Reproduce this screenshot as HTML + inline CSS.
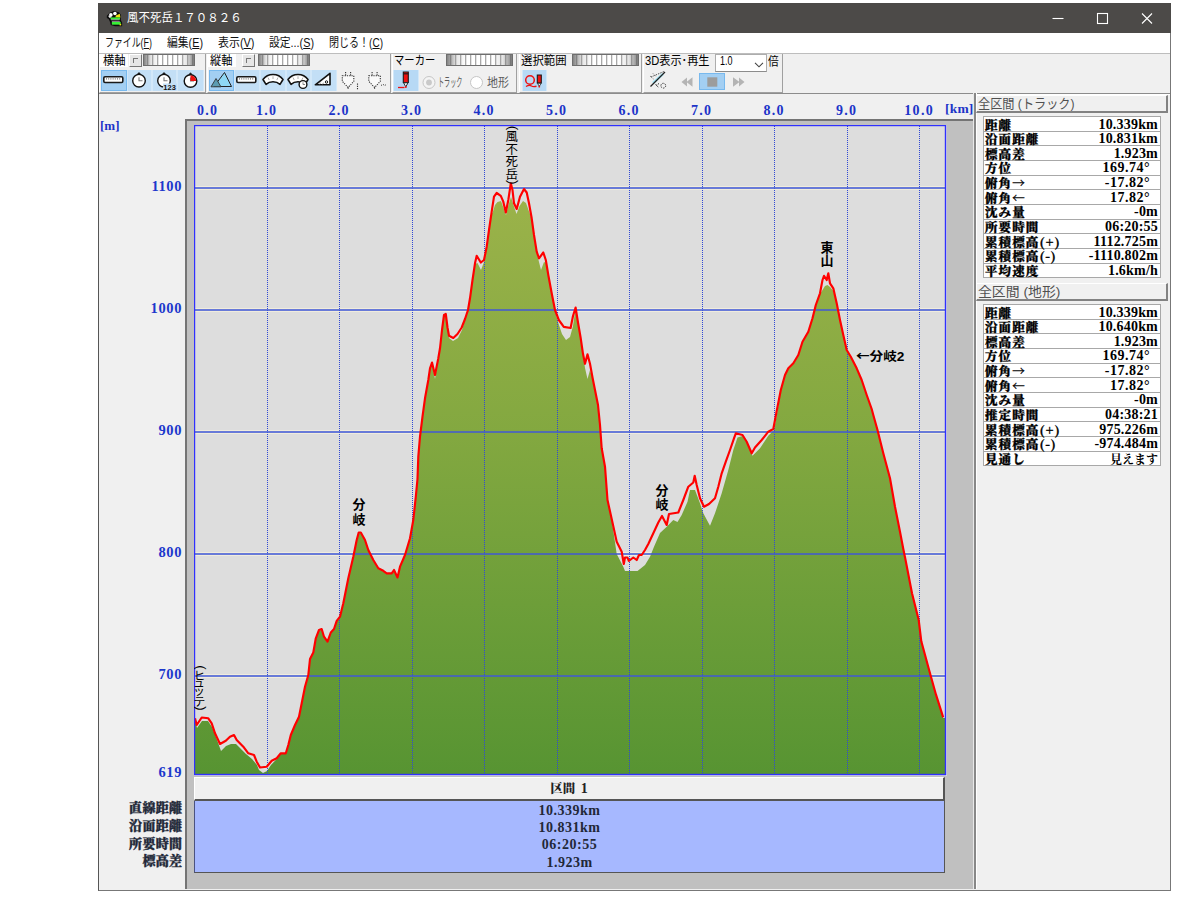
<!DOCTYPE html><html lang="ja"><head><meta charset="utf-8"><title>風不死岳１７０８２６</title><style>
*{box-sizing:border-box;margin:0;padding:0}
html,body{width:1200px;height:900px;background:#fff;overflow:hidden}
body{position:relative;font-family:"Liberation Sans","Noto Sans CJK JP",sans-serif;font-size:12px;color:#000}
.a{position:absolute}
#win{left:98px;top:3px;width:1073px;height:887.6px;background:#f0f0f0;border:1px solid #777;border-left-color:#555;border-top:none}
#title{left:98px;top:3px;width:1073px;height:30px;background:#4c4a48;color:#fff;font-size:12px;line-height:30px}
#menu{left:99px;top:33px;width:1071px;height:20px;background:#fff;font-size:12px;line-height:20px;color:#111}
#menu span{position:absolute;top:0;white-space:nowrap}
.u{text-decoration:underline}
.grp{position:absolute;top:54px;height:39px;border-right:1px solid #a0a0a0;border-bottom:1px solid #a0a0a0;border-left:1px solid #fff}
.lbl{position:absolute;top:54px;height:13px;line-height:13px;font-size:12px;white-space:nowrap;color:#000;letter-spacing:-0.3px}
.sl{position:absolute;top:53.7px;height:12.5px;border:1px solid #6e6e6e;background:linear-gradient(90deg,rgba(90,90,90,.75),rgba(150,150,150,.25) 14%,rgba(255,255,255,0) 30%,rgba(255,255,255,0) 70%,rgba(150,150,150,.25) 86%,rgba(90,90,90,.75)),repeating-linear-gradient(90deg,#fff 0,#fff 3px,#a8a8a8 3px,#a8a8a8 4px,#e4e4e4 4px,#e4e4e4 5px)}
.sb{position:absolute;top:54px;width:13px;height:13px;background:#e6e6e6;border:1px solid #fff;border-right-color:#777;border-bottom-color:#777}
.sb:after{content:"";position:absolute;left:3px;top:3px;width:4px;height:4px;border-left:1px solid #777;border-top:1px solid #777}
.tb{position:absolute;top:70px;height:22px;background:#cbe3f6}
.tb.on{background:#a6d0f2;border:1px solid #74b4ea}
.ser{font-family:"Liberation Serif","Noto Serif CJK JP","Noto Serif CJK SC",serif;font-weight:bold}
.xl{position:absolute;top:102.5px;width:44px;margin-left:-22px;text-align:center;font-size:14px;line-height:16px;color:#1c34c8;white-space:nowrap;letter-spacing:1.3px;text-indent:1.3px}
.yl{position:absolute;left:120px;width:62px;text-align:right;font-size:14.5px;line-height:16px;color:#1c38cc;letter-spacing:.6px}
.ll{position:absolute;left:110px;width:72.3px;text-align:right;font-size:13px;line-height:18px;color:#222838;white-space:nowrap;font-weight:900;letter-spacing:.3px;-webkit-text-stroke:.35px #222838}
.hd{position:absolute;left:976px;width:192px;height:18px;background:#f0f0f0;border:1px solid #fff;border-right:2px solid #828282;border-bottom:2px solid #828282;font-size:13px;line-height:15px;color:#5a5a5a;padding-left:1px;white-space:nowrap}
.tbl{position:absolute;left:983px;width:178px;border:1px solid #a8a8a8;border-bottom:none;background:#fff}
.tbl div{height:14.67px;border-bottom:1px solid #a8a8a8;position:relative;font-size:13.5px;line-height:14px;white-space:nowrap;color:#000}
.tbl div b{position:absolute;left:1px;top:.5px;font-family:'Noto Serif CJK JP','Noto Serif CJK SC',serif;font-size:12.5px;letter-spacing:1.1px;font-weight:900;-webkit-text-stroke:.3px #000}
.tbl div i{position:absolute;right:2px;top:.5px;font-style:normal;font-weight:bold;font-size:14px;letter-spacing:.2px}
.tbl div i.d{right:10px;letter-spacing:.5px}
.tbl s{text-decoration:none;font-family:'Noto Serif CJK JP','Noto Serif CJK SC',serif}
</style></head><body><div id="win" class="a"></div><div id="title" class="a"><span class="a" style="left:29.3px;top:7.5px;font-size:12px;line-height:15px;color:#fff;white-space:nowrap;transform-origin:0 0;transform:scaleX(0.956);">風不死岳１７０８２６</span><svg class="a" style="left:8px;top:6.500px" width="17" height="17" viewBox="0 0 16 16"><path d="M.8 5.500L3.500 2.500 7.500 1l4.500 1 2 2.500v5l1.200 2.500v3.200H8.500L4.500 14l-.8-3-1.200-2.500L.8 7.500z" fill="#0c0c0c"/><circle cx="4.600" cy="4.600" r="1.700" fill="#fff"/><circle cx="8.400" cy="3.300" r="1.700" fill="#fff"/><path d="M2 5.500h3v1.800H3z" fill="#e8e8e8"/><path d="M9.300 5.200l3.700-1.700.6 3.500H8.800z" fill="#f0e010"/><rect x="4.300" y="7" width="8.900" height="2" fill="#38f038"/><rect x="4.800" y="9" width="8" height=".6" fill="#e8c8e8"/><rect x="5.500" y="11.200" width="8.300" height="2.600" fill="#38f038"/><rect x="5.500" y="10.700" width="7.500" height=".5" fill="#e8c8e8"/><rect x="12.800" y="13" width="1.500" height="1.500" fill="#f0e010"/></svg><svg class="a" style="left:950px;top:8px" width="110" height="16" viewBox="0 0 110 16"><g stroke="#fff" stroke-width="1.1" fill="none"><path d="M4.5 7.5h11"/><rect x="49.500" y="2.500" width="10" height="10"/><path d="M94 2.500l10 10M104 2.500l-10 10"/></g></svg></div><div id="menu" class="a"><span class="a" style="left:6px;top:2.5px;font-size:12px;line-height:15px;color:#111;white-space:nowrap;transform-origin:0 0;transform:scaleX(0.742);">ファイル(<u>F</u>)</span><span class="a" style="left:67.7px;top:2.5px;font-size:12px;line-height:15px;color:#111;white-space:nowrap;transform-origin:0 0;transform:scaleX(0.900);">編集(<u>E</u>)</span><span class="a" style="left:118.5px;top:2.5px;font-size:12px;line-height:15px;color:#111;white-space:nowrap;transform-origin:0 0;transform:scaleX(0.912);">表示(<u>V</u>)</span><span class="a" style="left:170px;top:2.5px;font-size:12px;line-height:15px;color:#111;white-space:nowrap;transform-origin:0 0;transform:scaleX(0.900);">設定...(<u>S</u>)</span><span class="a" style="left:230px;top:2.5px;font-size:12px;line-height:15px;color:#111;white-space:nowrap;transform-origin:0 0;transform:scaleX(0.835);">閉じる！(<u>C</u>)</span></div><div class="a" style="left:99px;top:92.5px;width:1071px;height:1.500px;background:#8c8c8c"></div><div class="a" style="left:976px;top:94px;width:194px;height:1px;background:#fff"></div><div class="a" style="left:99px;top:53px;width:1071px;height:1px;background:#bdbdbd"></div><div class="a" style="left:100px;top:54px;width:28px;height:13px;background:#fff"></div><div class="a" style="left:208px;top:54px;width:28px;height:13px;background:#fff"></div><div class="grp" style="left:99px;width:107px"></div><div class="grp" style="left:207px;width:184px"></div><div class="grp" style="left:392px;width:125px"></div><div class="grp" style="left:519px;width:123px"></div><div class="grp" style="left:643px;width:140px"></div><span class="a" style="left:102.7px;top:53.8px;font-size:12px;line-height:15px;color:#000;white-space:nowrap;transform-origin:0 0;transform:scaleX(0.941);font-weight:400;">横軸</span><div class="sb" style="left:129px"></div><div class="sl" style="left:143.3px;width:52.200px"></div><span class="a" style="left:210px;top:53.8px;font-size:12px;line-height:15px;color:#000;white-space:nowrap;transform-origin:0 0;transform:scaleX(0.937);font-weight:400;">縦軸</span><div class="sb" style="left:242px"></div><div class="sl" style="left:257.5px;width:52.500px"></div><span class="a" style="left:393.7px;top:53.8px;font-size:12px;line-height:15px;color:#000;white-space:nowrap;transform-origin:0 0;transform:scaleX(0.860);font-weight:400;">マーカー</span><div class="sl" style="left:446px;width:67px"></div><span class="a" style="left:520.5px;top:53.8px;font-size:12px;line-height:15px;color:#000;white-space:nowrap;transform-origin:0 0;transform:scaleX(0.948);font-weight:400;">選択範囲</span><div class="sl" style="left:572px;width:67px"></div><span class="a" style="left:645px;top:53.8px;font-size:12px;line-height:15px;color:#000;white-space:nowrap;transform-origin:0 0;transform:scaleX(0.930);font-weight:400;">3D表示･再生</span><div class="a" style="left:715px;top:53.5px;width:51.500px;height:18.500px;background:#fff;border:1px solid #adadad;border-bottom-color:#8c8c8c"><svg class="a" style="left:38px;top:7px" width="10" height="6" viewBox="0 0 10 6"><path d="M1 .8l4 4 4-4" stroke="#444" fill="none" stroke-width="1.100"/></svg></div><span class="a" style="left:720px;top:54px;font-size:12px;line-height:15px;color:#000;white-space:nowrap;transform-origin:0 0;transform:scaleX(0.749);">1.0</span><span class="a" style="left:768px;top:55px;font-size:12px;line-height:15px;color:#000;white-space:nowrap;transform-origin:0 0;transform:scaleX(0.891);">倍</span><div class="a" style="left:101px;top:69.5px;width:25.5px;height:21.5px;background:#a3cff3;border:1px solid #78b9ee"></div><div class="a" style="left:126.5px;top:69.5px;width:25.0px;height:21.5px;background:#c3dff6;border-left:1px solid #d3e8f9;border-right:1px solid #d3e8f9"></div><div class="a" style="left:151.5px;top:69.5px;width:25.5px;height:21.5px;background:#c3dff6;border-left:1px solid #d3e8f9;border-right:1px solid #d3e8f9"></div><div class="a" style="left:177px;top:69.5px;width:26.5px;height:21.5px;background:#c3dff6;border-left:1px solid #d3e8f9;border-right:1px solid #d3e8f9"></div><div class="a" style="left:208.5px;top:69.5px;width:25.5px;height:21.5px;background:#a3cff3;border:1px solid #78b9ee"></div><div class="a" style="left:234px;top:69.5px;width:25.5px;height:21.5px;background:#c3dff6;border-left:1px solid #d3e8f9;border-right:1px solid #d3e8f9"></div><div class="a" style="left:259.5px;top:69.5px;width:26.0px;height:21.5px;background:#c3dff6;border-left:1px solid #d3e8f9;border-right:1px solid #d3e8f9"></div><div class="a" style="left:285.5px;top:69.5px;width:25.5px;height:21.5px;background:#c3dff6;border-left:1px solid #d3e8f9;border-right:1px solid #d3e8f9"></div><div class="a" style="left:311px;top:69.5px;width:25.5px;height:21.5px;background:#c3dff6;border-left:1px solid #d3e8f9;border-right:1px solid #d3e8f9"></div><div class="a" style="left:393px;top:69.5px;width:25.5px;height:21.5px;background:#b7d9f5;border-left:1px solid #d3e8f9;border-right:1px solid #d3e8f9"></div><div class="a" style="left:521.5px;top:69.5px;width:25.5px;height:21.5px;background:#b7d9f5;border-left:1px solid #d3e8f9;border-right:1px solid #d3e8f9"></div><div class="a" style="left:699.3px;top:73.3px;width:25.40000000000009px;height:16.400000000000006px;background:#a3cff3;border:1px solid #78b9ee"></div><svg class="a" style="left:98px;top:52px" width="700" height="42" viewBox="98 52 700 42"><rect x="103.8" y="76.700" width="19" height="5.800" rx="1.200" fill="#fff" stroke="#1a1a1a" stroke-width="1.600"/><path d="M106.5 77.500v2.200m2.200-2.200v2.200m2.200-2.200v2.200m2.200-2.200v2.200m2.200-2.200v2.200m2.200-2.200v2.200m2.200-2.200v2.200" stroke="#8a8a8a" stroke-width=".9"/><circle cx="139" cy="80.7" r="6.3" fill="#fff" stroke="#111" stroke-width="1.400"/><path d="M137.5 74.10000000000001l1.500-1.700 1.500 1.700z" fill="#111" stroke="#111" stroke-width=".6"/><path d="M139 77.2V80.7h3.500" stroke="#777" stroke-width="1.100" fill="none"/><circle cx="164" cy="80.7" r="6.3" fill="#fff" stroke="#111" stroke-width="1.400"/><path d="M162.5 74.10000000000001l1.500-1.700 1.500 1.700z" fill="#111" stroke="#111" stroke-width=".6"/><path d="M164 77.2V80.7h3.500" stroke="#777" stroke-width="1.100" fill="none"/><rect x="163" y="83.500" width="14" height="7" fill="#c3dff6"/><text x="163.300" y="90" font-family="Liberation Sans,sans-serif" font-size="7.500" font-weight="bold" fill="#111" textLength="12.500" lengthAdjust="spacingAndGlyphs">123</text><circle cx="190.5" cy="81" r="6.3" fill="#fff" stroke="#111" stroke-width="1.400"/><path d="M189.0 74.4l1.500-1.700 1.500 1.700z" fill="#111" stroke="#111" stroke-width=".6"/><path d="M190.5 77.5V81h3.500" stroke="#777" stroke-width="1.100" fill="none"/><path d="M190.500 81V75.300A5.700 5.700 0 0 1 196.200 81z" fill="#ee1111"/><path d="M214 86.500l10.500-14 7 14z" fill="#8ed7f4" stroke="#222" stroke-width="1"/><path d="M211 86.800l5-8.300 5 8.300z" fill="#5c9cb2" stroke="#333" stroke-width=".9"/><rect x="236.8" y="76.700" width="19" height="5.800" rx="1.200" fill="#fff" stroke="#1a1a1a" stroke-width="1.600"/><path d="M239.5 77.500v2.200m2.200-2.200v2.200m2.200-2.200v2.200m2.200-2.200v2.200m2.200-2.200v2.200m2.200-2.200v2.200m2.200-2.200v2.200" stroke="#8a8a8a" stroke-width=".9"/><path d="M263 79.500c2.500-3.500 6-5 10-5s7.500 1.500 10 5l-3 4.800c-2-1.800-4.300-2.600-7-2.600s-5 .8-7 2.600z" fill="#fff" stroke="#111" stroke-width="1.600" stroke-linejoin="round"/><path d="M268 77.500l1.200 2.500M273 76.300v2.700M278 77.500l-1.200 2.500" stroke="#999" stroke-width=".8"/><path d="M288 79.500c2.500-3.500 6-5 10-5s7.500 1.500 10 5l-3 4.800c-2-1.800-4.300-2.600-7-2.600s-5 .8-7 2.600z" fill="#fff" stroke="#111" stroke-width="1.600" stroke-linejoin="round"/><path d="M293 77.500l1.200 2.500M298 76.300v2.700M303 77.500l-1.200 2.500" stroke="#999" stroke-width=".8"/><circle cx="303" cy="84.500" r="3.900" fill="#fff" stroke="#111" stroke-width="1.400"/><path d="M303 82.300v2.200h2" stroke="#777" stroke-width=".9" fill="none"/><path d="M315.300 84.800L330 73.300V84.800z" fill="#fff" stroke="#111" stroke-width="1.600" stroke-linejoin="round"/><circle cx="326.500" cy="82" r="1.200" fill="#fff" stroke="#111" stroke-width="1"/><path d="M319.500 84.500l1-1.800m2 1.800l1-1.800" stroke="#777" stroke-width=".7"/><g stroke="#333" stroke-width="1.100" fill="none" stroke-dasharray="1.200 1.100"><path d="M342.3 75.800h11.500v5.500l-5.700 6.200-5.800-6.200z" fill="#fafafa"/><path d="M345.6 72v3.800M350.6 72v3.800M348.1 87.500v2"/></g><path d="M357.500 83.500v6" stroke="#333" stroke-width="1.100" stroke-dasharray="1.200 1.100"/><g stroke="#333" stroke-width="1.100" fill="none" stroke-dasharray="1.200 1.100"><path d="M368.8 75.800h11.500v5.500l-5.700 6.200-5.800-6.200z" fill="#fafafa"/><path d="M372.1 72v3.800M377.1 72v3.800M374.6 87.500v2"/></g><path d="M381 85.500l2-1.200 1.500 1.200 2-1" stroke="#444" stroke-width="1" stroke-dasharray="1.200 1.100" fill="none"/><path d="M403.300 72h5v10.500h-5z" fill="#ee1111" stroke="#1a1a1a" stroke-width="1.100"/><path d="M403.300 73.800h5" stroke="#1a1a1a" stroke-width="1.200"/><path d="M403.600 82.800l2.200 4 2.200-4z" fill="#fff" stroke="#1a1a1a" stroke-width=".9"/><circle cx="405.800" cy="87" r="1" fill="#ee1111"/><path d="M398 87.500h6.500" stroke="#ee1111" stroke-width="1.300"/><circle cx="429" cy="82.500" r="6" fill="#f4f4f4" stroke="#c6c6c6" stroke-width="1"/><circle cx="429" cy="82.500" r="2.900" fill="#c9c9c9"/><circle cx="476.500" cy="82.500" r="6" fill="#fff" stroke="#c6c6c6" stroke-width="1"/><ellipse cx="530" cy="80" rx="4.300" ry="4.300" fill="none" stroke="#ee1111" stroke-width="1.500"/><path d="M526 86.500c2.500-1.500 4-1.500 5.500-.5s3 .8 5 .3" stroke="#ee1111" stroke-width="1.400" fill="none"/><path d="M537.300 75h4v8h-4z" fill="#ee1111" stroke="#1a1a1a" stroke-width="1.100"/><path d="M537.500 83.300l1.800 3 1.800-3z" fill="#fff" stroke="#1a1a1a" stroke-width=".8"/><circle cx="539.300" cy="86.700" r=".9" fill="#ee1111"/><g fill="none"><path d="M651 77l13-5.500" stroke="#555" stroke-width="1" stroke-dasharray="1.500 1"/><path d="M653 83l10-9" stroke="#a5e6f7" stroke-width="2.600"/><path d="M650.500 86.500L665 72" stroke="#222" stroke-width="1.300"/><path d="M650 76l3.500 3M653 73.500l3 3" stroke="#555" stroke-width=".9" stroke-dasharray="1 1"/><circle cx="663.300" cy="85.700" r="2.400" stroke="#333" stroke-width="1" stroke-dasharray="1.300 1"/><path d="M655.500 84.500l3.500 3.200M659 83.500l-3 2" stroke="#333" stroke-width="1" stroke-dasharray="1.300 1"/></g><path d="M681.500 82l5.500-4.500v9zM686.500 82l6-4.700v9.400z" fill="#b4b4b4"/><rect x="707.300" y="77.300" width="10" height="9.400" fill="#9c9c9c"/><path d="M744.500 82l-5.500-4.500v9zM739.500 82l-6.500-4.700v9.400z" fill="#b4b4b4"/></svg><span class="a" style="left:437.5px;top:75.5px;font-size:12px;line-height:15px;color:#5c5c5c;white-space:nowrap;transform-origin:0 0;transform:scaleX(0.510);">トラック</span><span class="a" style="left:486.5px;top:75.5px;font-size:12px;line-height:15px;color:#5c5c5c;white-space:nowrap;transform-origin:0 0;transform:scaleX(0.916);">地形</span><div class="a" style="left:185px;top:119px;width:788px;height:770px;background:#c0c0c0;border-left:2px solid #747474;border-top:2px solid #747474"></div><div class="a" style="left:973px;top:93px;width:1px;height:796px;background:#e8e8e8"></div><div class="a" style="left:974px;top:93px;width:2px;height:796px;background:#888"></div><div class="a" style="left:976px;top:93px;width:1px;height:796px;background:#fff"></div><div class="xl ser" style="left:207.0px">0.0</div><div class="xl ser" style="left:266.0px">1.0</div><div class="xl ser" style="left:338.5px">2.0</div><div class="xl ser" style="left:411.0px">3.0</div><div class="xl ser" style="left:483.5px">4.0</div><div class="xl ser" style="left:556.0px">5.0</div><div class="xl ser" style="left:628.5px">6.0</div><div class="xl ser" style="left:701.0px">7.0</div><div class="xl ser" style="left:773.5px">8.0</div><div class="xl ser" style="left:846.0px">9.0</div><div class="xl ser" style="left:918.5px">10.0</div><div class="a ser" style="left:945px;top:101px;font-size:13.5px;letter-spacing:.2px;line-height:16px;color:#1c34c8">[km]</div><div class="a ser" style="left:100px;top:118px;font-size:13px;line-height:16px;color:#1c34c8">[m]</div><div class="yl ser" style="top:177.7px">1100</div><div class="yl ser" style="top:299.7px">1000</div><div class="yl ser" style="top:421.7px">900</div><div class="yl ser" style="top:543.7px">800</div><div class="yl ser" style="top:665.7px">700</div><div class="yl ser" style="top:764.0px">619</div><div class="ll ser" style="top:799.2px">直線距離</div><div class="ll ser" style="top:816.9px">沿面距離</div><div class="ll ser" style="top:834.6px">所要時間</div><div class="ll ser" style="top:852.3px">標高差</div><svg class="a" style="left:194px;top:125px" width="753" height="651" viewBox="194 125 753 651"><defs><linearGradient id="g" gradientUnits="userSpaceOnUse" x1="0" y1="185" x2="0" y2="775"><stop offset="0" stop-color="#9cb34a"/><stop offset="0.42" stop-color="#83a840"/><stop offset="1" stop-color="#579432"/></linearGradient></defs><rect x="194" y="125" width="753" height="651" fill="#dddddd"/><path d="M195 186.5H945M195 189.5H945" stroke="#fff8dc" stroke-opacity=".55" stroke-width="1" fill="none"/><path d="M195 308.5H945M195 311.5H945" stroke="#fff8dc" stroke-opacity=".55" stroke-width="1" fill="none"/><path d="M195 430.5H945M195 433.5H945" stroke="#fff8dc" stroke-opacity=".55" stroke-width="1" fill="none"/><path d="M195 552.5H945M195 555.5H945" stroke="#fff8dc" stroke-opacity=".55" stroke-width="1" fill="none"/><path d="M195 674.5H945M195 677.5H945" stroke="#fff8dc" stroke-opacity=".55" stroke-width="1" fill="none"/><polygon points="194.5,775 194.500,719.1 195.0,719.1 197.0,728.0 202.0,721.0 208.0,721.0 212.0,727.0 216.0,737.0 221.0,751.0 226.0,746.0 231.0,744.0 236.0,744.0 240.0,748.0 246.0,754.0 252.0,759.0 257.0,765.0 259.0,770.0 263.0,773.0 267.0,771.0 271.0,765.0 276.7,759.1 280.8,754.1 285.8,754.1 288.3,745.8 290.8,735.8 295.0,725.8 299.0,717.5 301.7,704.1 305.0,687.5 308.3,675.8 310.0,659.8 313.3,653.3 315.8,639.1 319.0,630.8 321.7,629.8 324.0,637.5 327.5,642.5 330.8,633.3 334.0,629.8 336.7,621.6 340.0,617.5 343.3,604.1 348.3,579.1 353.3,557.5 356.7,540.8 358.7,533.3 360.8,533.3 365.0,540.8 368.3,550.8 373.3,560.8 378.3,569.1 383.3,571.6 386.7,574.1 391.7,574.1 394.0,570.8 397.5,578.3 400.0,567.5 405.0,555.8 410.0,539.1 413.3,520.8 415.8,497.5 417.5,479.8 418.3,457.5 420.0,437.5 422.5,417.5 425.0,399.1 428.3,380.8 430.0,369.1 432.0,363.3 435.0,379.0 438.3,359.1 440.0,349.1 442.0,330.8 444.0,315.8 445.8,314.8 449.0,338.0 453.0,341.0 458.0,338.0 462.0,330.0 465.0,319.8 468.0,310.8 470.0,299.1 472.5,280.8 475.0,264.1 477.5,263.0 481.0,270.0 484.0,262.0 486.7,247.5 489.0,230.8 491.7,212.5 492.5,213.0 495.0,205.0 497.5,202.0 501.0,201.0 503.5,208.0 506.0,215.0 508.5,205.0 511.0,197.0 513.5,205.0 516.5,214.0 519.5,206.0 523.0,201.0 526.0,203.0 528.5,210.0 531.7,219.1 534.0,235.8 536.7,252.5 538.0,258.0 541.0,270.0 544.0,262.0 546.0,263.0 548.3,275.8 551.7,294.1 555.0,310.8 558.0,322.0 562.0,334.0 566.0,340.0 570.0,337.0 573.0,326.0 575.6,308.3 578.0,323.3 580.6,338.3 583.0,354.6 585.0,368.0 587.5,379.0 590.0,370.0 592.5,378.3 595.0,390.8 598.0,405.8 600.0,425.8 601.7,449.1 605.0,467.5 607.5,500.8 611.7,519.8 616.7,554.0 623.3,566.7 625.0,571.0 637.5,571.0 645.0,565.0 650.0,556.7 654.0,546.7 660.0,533.0 666.7,526.7 673.3,520.0 677.5,522.0 681.7,515.0 687.5,501.7 690.0,490.0 695.0,490.0 700.0,503.3 703.3,513.3 710.0,525.8 715.0,513.3 721.7,493.3 728.3,470.0 733.3,450.0 737.5,437.5 742.5,436.0 747.0,443.0 752.5,455.8 760.0,448.3 768.3,435.8 774.0,430.0 777.0,414.0 780.8,390.8 785.0,375.8 788.3,369.1 793.3,364.1 798.3,355.8 802.5,342.5 808.3,332.5 812.5,319.1 815.8,305.8 820.0,294.1 822.5,290.0 825.0,286.0 827.5,285.0 830.0,287.0 833.3,291.0 836.7,304.1 840.0,320.8 843.3,335.8 846.7,350.8 850.8,357.5 856.7,369.1 861.7,380.8 866.7,395.8 871.7,409.8 873.3,415.8 877.5,430.8 883.3,454.1 890.0,479.1 895.0,507.5 900.0,532.5 903.3,549.8 905.3,559.5 912.0,594.1 918.7,620.8 921.3,642.1 929.3,671.5 936.0,695.5 943.2,718.1 945.500,718.1 945.500,775" fill="url(#g)"/><path d="M267.5 126V775" stroke="#3048d4" stroke-width="1" stroke-dasharray="1 1" shape-rendering="crispEdges" fill="none"/><path d="M339.5 126V775" stroke="#3048d4" stroke-width="1" stroke-dasharray="1 1" shape-rendering="crispEdges" fill="none"/><path d="M412.5 126V775" stroke="#3048d4" stroke-width="1" stroke-dasharray="1 1" shape-rendering="crispEdges" fill="none"/><path d="M484.5 126V775" stroke="#3048d4" stroke-width="1" stroke-dasharray="1 1" shape-rendering="crispEdges" fill="none"/><path d="M557.5 126V775" stroke="#3048d4" stroke-width="1" stroke-dasharray="1 1" shape-rendering="crispEdges" fill="none"/><path d="M629.5 126V775" stroke="#3048d4" stroke-width="1" stroke-dasharray="1 1" shape-rendering="crispEdges" fill="none"/><path d="M702.5 126V775" stroke="#3048d4" stroke-width="1" stroke-dasharray="1 1" shape-rendering="crispEdges" fill="none"/><path d="M774.5 126V775" stroke="#3048d4" stroke-width="1" stroke-dasharray="1 1" shape-rendering="crispEdges" fill="none"/><path d="M847.5 126V775" stroke="#3048d4" stroke-width="1" stroke-dasharray="1 1" shape-rendering="crispEdges" fill="none"/><path d="M919.5 126V775" stroke="#3048d4" stroke-width="1" stroke-dasharray="1 1" shape-rendering="crispEdges" fill="none"/><path d="M194 188H946" stroke="#4058d6" stroke-width="1.500" fill="none"/><path d="M194 310H946" stroke="#4058d6" stroke-width="1.500" fill="none"/><path d="M194 432H946" stroke="#4058d6" stroke-width="1.500" fill="none"/><path d="M194 554H946" stroke="#4058d6" stroke-width="1.500" fill="none"/><path d="M194 676H946" stroke="#4058d6" stroke-width="1.500" fill="none"/><polyline points="195.0,718.3 196.7,725.0 201.7,717.5 208.3,718.3 211.7,723.3 215.0,733.3 220.0,744.0 225.8,740.8 230.0,736.7 234.0,735.0 236.7,740.0 243.3,746.7 248.3,753.3 254.0,755.0 256.7,761.7 260.0,767.5 266.7,766.7 271.7,760.8 276.7,758.3 280.8,753.3 285.8,753.3 288.3,745.0 290.8,735.0 295.0,725.0 299.0,716.7 301.7,703.3 305.0,686.7 308.3,675.0 310.0,659.0 313.3,652.5 315.8,638.3 319.0,630.0 321.7,629.0 324.0,636.7 327.5,641.7 330.8,632.5 334.0,629.0 336.7,620.8 340.0,616.7 343.3,603.3 348.3,578.3 353.3,556.7 356.7,540.0 358.7,532.5 360.8,532.5 365.0,540.0 368.3,550.0 373.3,560.0 378.3,568.3 383.3,570.8 386.7,573.3 391.7,573.3 394.0,570.0 397.5,577.5 400.0,566.7 405.0,555.0 410.0,538.3 413.3,520.0 415.8,496.7 417.5,479.0 418.3,456.7 420.0,436.7 422.5,416.7 425.0,398.3 428.3,380.0 430.0,368.3 432.0,362.5 435.0,375.0 438.3,358.3 440.0,348.3 442.0,330.0 444.0,315.0 445.8,314.0 447.5,327.5 449.0,335.8 453.3,338.0 457.5,334.0 461.7,327.5 465.0,319.0 468.0,310.0 470.0,298.3 472.5,280.0 475.0,263.3 476.7,255.8 480.8,262.5 484.0,260.0 486.7,246.7 489.0,230.0 491.7,211.7 494.0,196.7 496.7,193.0 500.8,195.8 503.3,201.7 505.8,212.5 508.3,200.0 510.8,183.3 512.5,190.0 514.0,203.3 516.7,209.0 520.0,196.7 524.0,189.0 526.7,192.5 529.0,203.3 531.7,218.3 534.0,235.0 536.7,251.7 539.0,258.3 543.3,252.5 545.8,260.0 548.3,275.0 551.7,293.3 555.0,310.0 558.8,320.0 563.8,326.9 570.6,328.0 573.0,316.0 575.6,307.5 578.0,322.5 580.6,337.5 583.0,353.8 585.0,363.8 587.5,354.4 590.0,363.8 592.5,377.5 595.0,390.0 598.0,405.0 600.0,425.0 601.7,448.3 605.0,466.7 607.5,500.0 611.7,519.0 616.7,541.7 621.7,551.7 623.8,564.0 625.0,557.5 627.5,557.5 628.8,561.0 633.3,557.5 636.7,560.0 639.0,555.0 641.7,555.0 645.0,550.0 648.3,544.0 653.3,533.3 658.3,522.5 662.0,516.0 666.7,525.0 669.0,514.0 678.3,512.5 683.3,500.0 688.3,486.7 693.3,482.5 694.7,475.8 696.7,485.0 700.0,498.3 704.0,506.7 709.0,504.0 715.0,498.3 718.3,486.7 721.7,473.3 725.8,461.7 730.0,450.0 734.0,438.3 735.8,433.3 742.5,435.0 746.7,441.7 751.7,453.3 755.0,447.5 761.7,440.0 768.3,431.7 773.3,429.0 776.7,411.0 780.8,390.0 785.0,375.0 788.3,368.3 793.3,363.3 798.3,355.0 802.5,341.7 808.3,331.7 812.5,318.3 815.8,305.0 820.0,293.3 822.5,280.0 824.0,275.8 826.7,280.0 828.3,273.3 830.0,283.3 833.3,288.3 836.7,303.3 840.0,320.0 843.3,335.0 846.7,350.0 850.8,356.7 856.7,368.3 861.7,380.0 866.7,395.0 871.7,409.0 873.3,415.0 877.5,430.0 883.3,453.3 890.0,478.3 895.0,506.7 900.0,531.7 903.3,549.0 905.3,558.7 912.0,593.3 918.7,620.0 921.3,641.3 929.3,670.7 936.0,694.7 943.2,717.3" fill="none" stroke="#ff0000" stroke-width="2.150" stroke-linejoin="round"/><rect x="194.500" y="125.500" width="751" height="649" fill="none" stroke="#3030ff" stroke-width="1.400"/><g font-family='"Liberation Sans","Noto Sans CJK JP",sans-serif' font-weight="bold" font-size="13" fill="#000" text-anchor="middle"><text><tspan x="359" y="509.3">分</tspan><tspan x="359" y="523.5">岐</tspan></text><text><tspan x="662" y="495">分</tspan><tspan x="662" y="509.2">岐</tspan></text><text><tspan x="827" y="251.7">東</tspan><tspan x="827" y="265.2">山</tspan></text><text x="880.2" y="361.2" font-size="12.500" textLength="48.500" lengthAdjust="spacingAndGlyphs"><tspan font-family="Noto Sans CJK JP,sans-serif">←</tspan>分岐2</text></g><g font-family='"Liberation Sans","Noto Sans CJK JP",sans-serif' font-size="12.500" font-weight="400" fill="#000" text-anchor="middle"><text><tspan x="509.400" y="125.800" rotate="90" text-anchor="start" font-size="13.500">(</tspan><tspan x="511.7" y="140.900" rotate="0">風</tspan><tspan x="511.7" y="153.600" rotate="0">不</tspan><tspan x="511.7" y="166.300" rotate="0">死</tspan><tspan x="511.7" y="179" rotate="0">岳</tspan><tspan x="509.400" y="180" rotate="90" text-anchor="start" font-size="13.500">)</tspan></text><text font-size="11.500"><tspan x="196.500" y="665.300" rotate="90" text-anchor="start" font-size="13">(</tspan><tspan x="199.500" y="680" rotate="0">ヒ</tspan><tspan x="199" y="687" rotate="0">ュ</tspan><tspan x="199" y="695" rotate="0">ッ</tspan><tspan x="199.500" y="706.300" rotate="0">テ</tspan><tspan x="196.500" y="706.300" rotate="90" text-anchor="start" font-size="13">)</tspan></text></g></svg><div class="a ser" style="left:194px;top:777px;width:751px;height:24px;background:#f0f0f0;border:1px solid #fff;border-right:2px solid #555;border-bottom:2px solid #555;text-align:center;font-size:14px;line-height:20px;color:#222;word-spacing:2px"><span style="font-family:'Noto Serif CJK JP','Noto Serif CJK SC',serif;font-size:12.500px;font-weight:900">区間</span> 1</div><div class="a" style="left:194px;top:801px;width:751px;height:72px;background:#a6b8ff;border-left:1px solid #4a5280;border-right:1px solid #555;border-bottom:1px solid #555"></div><div class="a ser" style="left:194px;top:801.6px;width:751px;text-align:center;font-size:14px;letter-spacing:.5px;line-height:18px;color:#222838">10.339km</div><div class="a ser" style="left:194px;top:819.0px;width:751px;text-align:center;font-size:14px;letter-spacing:.5px;line-height:18px;color:#222838">10.831km</div><div class="a ser" style="left:194px;top:836.4px;width:751px;text-align:center;font-size:14px;letter-spacing:.5px;line-height:18px;color:#222838">06:20:55</div><div class="a ser" style="left:194px;top:853.8px;width:751px;text-align:center;font-size:14px;letter-spacing:.5px;line-height:18px;color:#222838">1.923m</div><div class="hd" style="top:95px"></div><span class="a" style="left:977.8px;top:96px;font-size:13px;line-height:16px;color:#505050;white-space:nowrap;transform-origin:0 0;transform:scaleX(0.935);">全区間 (トラック)</span><div class="tbl ser" style="top:116px"><div><b>距離</b><i>10.339km</i></div><div><b>沿面距離</b><i>10.831km</i></div><div><b>標高差</b><i>1.923m</i></div><div><b>方位</b><i class=d>169.74°</i></div><div><b>俯角→</b><i class=d>-17.82°</i></div><div><b>俯角←</b><i class=d>17.82°</i></div><div><b>沈み量</b><i>-0m</i></div><div><b>所要時間</b><i>06:20:55</i></div><div><b>累積標高(+)</b><i>1112.725m</i></div><div><b>累積標高(-)</b><i>-1110.802m</i></div><div><b>平均速度</b><i>1.6km/h</i></div></div><div class="hd" style="top:283px"></div><span class="a" style="left:978.3px;top:284px;font-size:13px;line-height:16px;color:#505050;white-space:nowrap;transform-origin:0 0;transform:scaleX(1.066);">全区間 (地形)</span><div class="tbl ser" style="top:304px"><div><b>距離</b><i>10.339km</i></div><div><b>沿面距離</b><i>10.640km</i></div><div><b>標高差</b><i>1.923m</i></div><div><b>方位</b><i class=d>169.74°</i></div><div><b>俯角→</b><i class=d>-17.82°</i></div><div><b>俯角←</b><i class=d>17.82°</i></div><div><b>沈み量</b><i>-0m</i></div><div><b>推定時間</b><i>04:38:21</i></div><div><b>累積標高(+)</b><i>975.226m</i></div><div><b>累積標高(-)</b><i>-974.484m</i></div><div><b>見通し</b><i><span style="font-family:'Noto Serif CJK JP',serif;font-size:12px;letter-spacing:0">見えます</span></i></div></div></body></html>
